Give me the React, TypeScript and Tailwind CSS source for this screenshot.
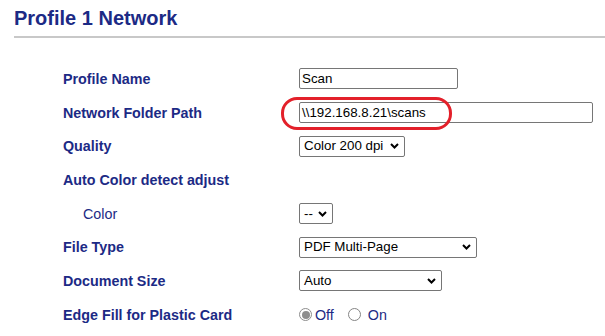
import React from "react";

const navy = "text-[#1c2a85]";

function Chevron() {
  return (
    <svg width="9" height="6" viewBox="0 0 9 6" className="shrink-0">
      <path d="M1 1 L4.5 4.5 L8 1" fill="none" stroke="#000" strokeWidth="2" />
    </svg>
  );
}

function Select({ value, w }: { value: string; w: string }) {
  return (
    <div
      className={`${w} h-[21px] flex items-center justify-between border border-[#767676] rounded-[2px] pl-[4px] pr-[5px] text-[13.33px] leading-[16px] text-black bg-white`}
    >
      <span>{value}</span>
      <Chevron />
    </div>
  );
}

function TextBox({ value, w }: { value: string; w: string }) {
  return (
    <div
      className={`${w} h-[21px] flex items-center border border-[#767676] rounded-[2px] px-[2px] text-[13.33px] leading-[16px] text-black bg-white`}
    >
      <span>{value}</span>
    </div>
  );
}

function Row({
  label,
  bold = true,
  indent = false,
  children,
}: {
  label: string;
  bold?: boolean;
  indent?: boolean;
  children?: React.ReactNode;
}) {
  return (
    <div className="flex items-center h-[33.7px]">
      <div
        className={`w-[236px] shrink-0 text-[14.3px] leading-[16px] ${navy} ${bold ? "font-bold" : "font-normal"} ${indent ? "pl-[20px]" : ""}`}
      >
        {label}
      </div>
      <div className="flex items-center">{children}</div>
    </div>
  );
}

function Radio({ checked }: { checked?: boolean }) {
  return checked ? (
    <div className="w-[13px] h-[13px] shrink-0 rounded-full border border-[#8d8d8d] flex items-center justify-center bg-white">
      <div className="w-[8px] h-[8px] rounded-full bg-[#8d8d8d]" />
    </div>
  ) : (
    <div className="w-[13px] h-[13px] shrink-0 rounded-full border border-[#858585] bg-white" />
  );
}

export default function App() {
  return (
    <div
      className="relative w-[605px] h-[336px] overflow-hidden bg-white"
      style={{ fontFamily: '"Liberation Sans", Arial, sans-serif' }}
    >
      <div className="pl-[14px] pt-[6.5px]">
        <h1 className={`text-[20px] leading-[23px] font-bold ${navy}`}>Profile 1 Network</h1>
        <div className="mt-[6.5px] h-[2px] bg-[#c8c8c8]" />
      </div>
      <div className="pl-[63px] pt-[24px]">
        <Row label="Profile Name">
          <TextBox value="Scan" w="w-[159px]" />
        </Row>
        <Row label="Network Folder Path">
          <TextBox value="\\192.168.8.21\scans" w="w-[294px]" />
        </Row>
        <Row label="Quality">
          <Select value="Color 200 dpi" w="w-[106px]" />
        </Row>
        <Row label="Auto Color detect adjust" />
        <Row label="Color" bold={false} indent>
          <Select value="--" w="w-[34px]" />
        </Row>
        <Row label="File Type">
          <Select value="PDF Multi-Page" w="w-[178px]" />
        </Row>
        <Row label="Document Size">
          <Select value="Auto" w="w-[143px]" />
        </Row>
        <Row label="Edge Fill for Plastic Card">
          <div className={`flex items-center text-[14.3px] leading-[16px] ${navy}`}>
            <Radio checked />
            <span className="ml-[3px]">Off</span>
            <div className="ml-[14px]">
              <Radio />
            </div>
            <span className="ml-[7px]">On</span>
          </div>
        </Row>
      </div>
      <div className="absolute left-[281px] top-[97px] w-[171px] h-[33px] rounded-[16px] border-[3px] border-[#e3202a]" />
    </div>
  );
}
